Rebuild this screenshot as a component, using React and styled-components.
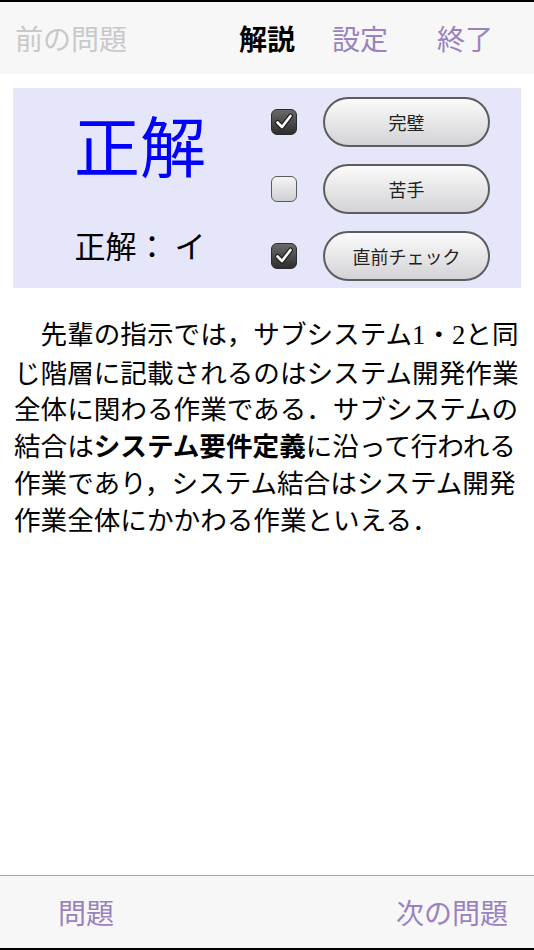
import React, { useState } from "react";
import styled, { createGlobalStyle } from "styled-components";

const GlobalStyle = createGlobalStyle`
  html, body {
    margin: 0;
    padding: 0;
    background: #ffffff;
  }
  body {
    font-family: "Noto Sans CJK JP", "Noto Sans", sans-serif;
    color: #000;
  }
`;

const Screen = styled.div`
  width: 534px;
  height: 950px;
  display: flex;
  flex-direction: column;
  background: #fff;
  overflow: hidden;
`;

// 上のナビゲーションバー
const TopBar = styled.div`
  height: 72px;
  flex: none;
  display: flex;
  align-items: center;
  padding-left: 15px;
  border-top: 2px solid #000;
  background: #f7f7f7;
`;

const NavItem = styled.span`
  font-size: 28px;
  line-height: 1;
  margin-left: ${(p) => p.$gap || 0}px;
  color: ${(p) => (p.$tone === "off" ? "#c9c9c9" : p.$tone === "on" ? "#000" : "#9a82c0")};
  font-weight: ${(p) => (p.$tone === "on" ? 700 : 400)};
`;

// 判定パネル
const Panel = styled.div`
  margin: 14px 13px 0;
  height: 200px;
  flex: none;
  background: #e6e6fa;
  display: flex;
`;

const ResultCol = styled.div`
  width: 254px;
  display: flex;
  flex-direction: column;
  align-items: center;
  padding-top: 22px;
`;

const BigResult = styled.div`
  font-size: 66px;
  line-height: 1;
  color: #0000ff;
`;

const Answer = styled.div`
  margin-top: 53px;
  font-size: 31px;
  line-height: 1;
  color: #000;
  white-space: pre;
`;

const MarkCol = styled.div`
  display: flex;
  flex-direction: column;
  gap: 17px;
  padding-top: 9px;
`;

const MarkRow = styled.div`
  height: 50px;
  display: flex;
  align-items: center;
  padding-left: 4px;
`;

const Box = styled.button`
  width: 26px;
  height: 26px;
  padding: 0;
  box-sizing: border-box;
  border-radius: 6px;
  border: 1.5px solid ${(p) => (p.$checked ? "#2a2a2a" : "#5a5a5a")};
  background: ${(p) =>
    p.$checked
      ? "linear-gradient(#6a6a6a, #2e2e2e)"
      : "linear-gradient(#f4f4f6, #cfcfd4)"};
  display: flex;
  align-items: center;
  justify-content: center;
  cursor: pointer;
`;

const PillButton = styled.button`
  margin-left: 26px;
  width: 167px;
  height: 50px;
  box-sizing: border-box;
  border-radius: 25px;
  border: 2px solid #5c5c5c;
  background: linear-gradient(#fbfbfb, #d3d3d7);
  font-family: "Noto Sans CJK JP", sans-serif;
  font-size: 18px;
  color: #222;
  cursor: pointer;
  padding: 0;
`;

// 解説本文
const Explain = styled.p`
  flex: 1;
  margin: 27px 0 0;
  padding: 0 12px 0 14px;
  font-size: 26.6px;
  line-height: 36.7px;
  text-indent: 1em;
  color: #000;
`;

const Num = styled.span`
  font-family: "Liberation Serif", serif;
`;

// 下のツールバー
const BottomBar = styled.div`
  height: 72px;
  flex: none;
  display: flex;
  align-items: center;
  justify-content: space-between;
  padding: 0 26px 0 58px;
  border-top: 1px solid #a8a8a8;
  border-bottom: 2px solid #000;
  background: #f7f7f7;
`;

const BarLink = styled.span`
  font-size: 28px;
  line-height: 1;
  color: #9a82c0;
`;

const Check = () => (
  <svg width="20" height="20" viewBox="0 0 20 20">
    <path d="M3.5 10.5 L8 15 L16.5 4" fill="none" stroke="#1e1e1e" strokeWidth="5" strokeLinecap="round" strokeLinejoin="round" />
    <path d="M3.5 10.5 L8 15 L16.5 4" fill="none" stroke="#fff" strokeWidth="2.6" strokeLinecap="round" strokeLinejoin="round" />
  </svg>
);

const marks = [
  { key: "perfect", label: "完璧", on: true },
  { key: "weak", label: "苦手", on: false },
  { key: "last", label: "直前チェック", on: true },
];

export default function App() {
  const [checked, setChecked] = useState(
    Object.fromEntries(marks.map((m) => [m.key, m.on]))
  );

  const toggle = (key) => setChecked((c) => ({ ...c, [key]: !c[key] }));

  return (
    <>
      <GlobalStyle />
      <Screen>
        <TopBar>
          <NavItem $tone="off">前の問題</NavItem>
          <NavItem $tone="on" $gap={112}>解説</NavItem>
          <NavItem $gap={37}>設定</NavItem>
          <NavItem $gap={49}>終了</NavItem>
        </TopBar>

        <Panel>
          <ResultCol>
            <BigResult>正解</BigResult>
            <Answer>{"正解： イ"}</Answer>
          </ResultCol>
          <MarkCol>
            {marks.map((m) => (
              <MarkRow key={m.key}>
                <Box $checked={checked[m.key]} onClick={() => toggle(m.key)}>
                  {checked[m.key] && <Check />}
                </Box>
                <PillButton onClick={() => toggle(m.key)}>{m.label}</PillButton>
              </MarkRow>
            ))}
          </MarkCol>
        </Panel>

        <Explain>
          先輩の指示では，サブシステム<Num>1</Num>・<Num>2</Num>と同じ階層に記載されるのはシステム開発作業全体に関わる作業である．サブシステムの結合は
          <b>システム要件定義</b>
          に沿って行われる作業であり，システム結合はシステム開発作業全体にかかわる作業といえる．
        </Explain>

        <BottomBar>
          <BarLink>問題</BarLink>
          <BarLink>次の問題</BarLink>
        </BottomBar>
      </Screen>
    </>
  );
}
